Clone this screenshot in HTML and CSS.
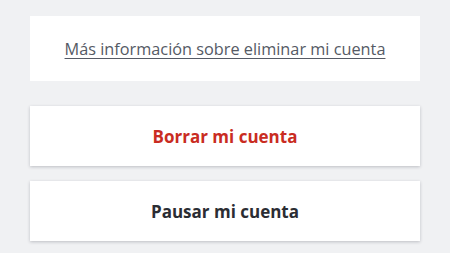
FILE: index.html
```html
<!DOCTYPE html>
<html lang="es">
<head>
<meta charset="utf-8">
<link rel="stylesheet" href="styles.css">
</head>
<body>
<main class="page">
  <section class="info-card">
    <a class="info-link" href="#">Más información sobre eliminar mi cuenta</a>
  </section>
  <div class="actions">
    <button class="action action-danger">Borrar mi cuenta</button>
    <button class="action">Pausar mi cuenta</button>
  </div>
</main>
</body>
</html>
```
FILE: styles.css
```css
html, body {
  margin: 0;
  padding: 0;
  background: #f0f1f3;
}
body {
  font-family: "Open Sans", "Liberation Sans", sans-serif;
}
.page {
  padding: 16px 30px 12px;
  display: flex;
  flex-direction: column;
  gap: 25px;
}
.info-card {
  background: #fff;
  height: 65px;
  display: flex;
  align-items: center;
  justify-content: center;
}
.info-link {
  color: #555a65;
  font-size: 16.3px;
  text-decoration: underline;
  text-underline-offset: 3px;
  text-decoration-thickness: 1px;
}
.actions {
  display: flex;
  flex-direction: column;
  gap: 15px;
}
.action {
  height: 60px;
  border: 0;
  background: #fff;
  box-shadow: 0 1px 3px rgba(40, 44, 55, 0.25);
  font-family: inherit;
  font-size: 17px;
  font-weight: 700;
  color: #2b2d33;
  cursor: pointer;
}
.action-danger {
  color: #c92c22;
}
```
